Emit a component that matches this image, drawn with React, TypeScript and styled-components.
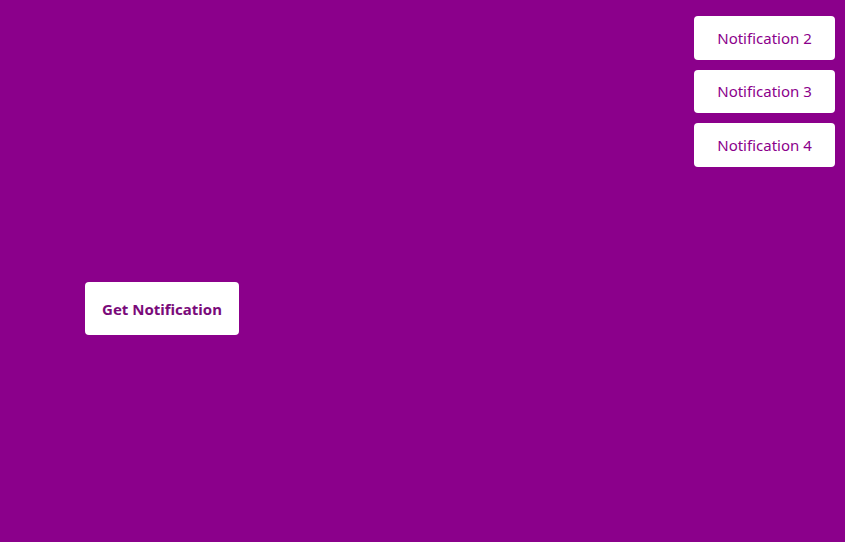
import React from "react";
import styled, { createGlobalStyle } from "styled-components";

const Global = createGlobalStyle`
  html, body { margin: 0; padding: 0; background: #8b008b; }
  body { font-family: "Noto Sans", "Open Sans", sans-serif; }
`;

const Page = styled.div`
  width: 845px;
  height: 542px;
  background: #8b008b;
  position: relative;
  overflow: hidden;
  padding: 282px 0 0 85px;
  box-sizing: border-box;
`;

const Button = styled.button`
  width: 154px;
  height: 53px;
  border: none;
  border-radius: 4px;
  background: #ffffff;
  color: #7a0a7a;
  font-family: "Noto Sans", sans-serif;
  font-weight: 700;
  font-size: 15px;
  cursor: pointer;
  display: flex;
  align-items: center;
  justify-content: center;
  padding: 0;
`;

const ToastStack = styled.div`
  position: absolute;
  top: 16px;
  right: 10px;
  display: flex;
  flex-direction: column;
  gap: 10px;
`;

const Toast = styled.div`
  width: 141px;
  height: 43.5px;
  background: #ffffff;
  border-radius: 4px;
  color: #8b008b;
  font-family: "Noto Sans", sans-serif;
  font-size: 15px;
  display: flex;
  align-items: center;
  justify-content: center;
  box-sizing: border-box;
`;

export default function App() {
  return (
    <>
      <Global />
      <Page>
        <Button>Get Notification</Button>
        <ToastStack>
          {[2, 3, 4].map((n) => (
            <Toast key={n}>Notification {n}</Toast>
          ))}
        </ToastStack>
      </Page>
    </>
  );
}
